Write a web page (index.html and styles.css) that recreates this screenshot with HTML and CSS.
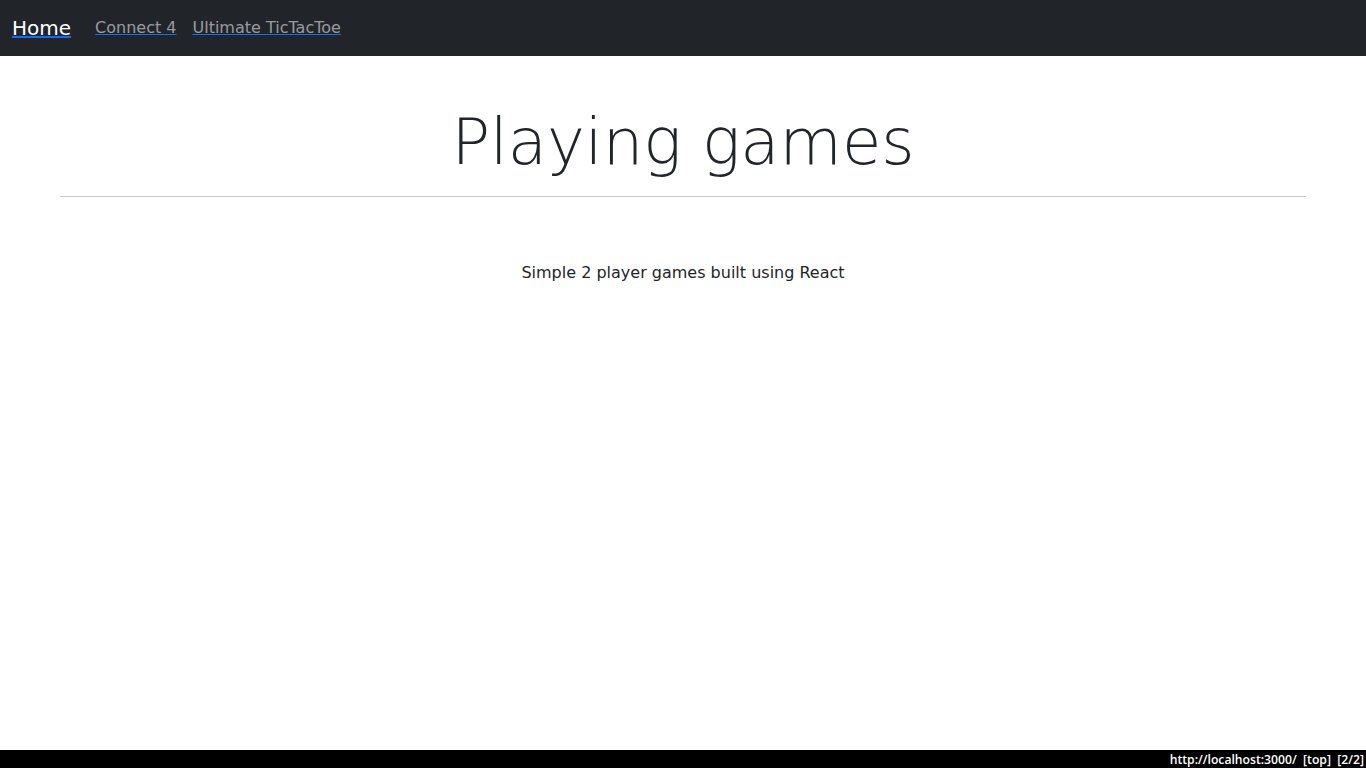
FILE: index.html
```html
<!DOCTYPE html>
<html lang="en">
<head>
<meta charset="utf-8">
<title>Playing games</title>
<link rel="stylesheet" href="styles.css">
</head>
<body>
<nav class="navbar">
  <a class="brand" href="#">Home</a>
  <div class="nav-links">
    <a class="nav-link" href="#">Connect 4</a>
    <a class="nav-link" href="#">Ultimate TicTacToe</a>
  </div>
</nav>
<main class="page">
  <header class="hero">
    <h1 class="title">Playing games</h1>
    <hr class="rule">
  </header>
  <p class="lead">Simple 2 player games built using React</p>
</main>
<div class="statusbar">http://localhost:3000/&nbsp; [top]&nbsp; [2/2]</div>
</body>
</html>
```
FILE: styles.css
```css
* { box-sizing: border-box; }
html, body { height: 100%; }
body {
  margin: 0;
  font-family: "DejaVu Sans", sans-serif;
  font-size: 16px;
  line-height: 1.5;
  color: #212529;
  background: #fff;
  display: flex;
  flex-direction: column;
}
.navbar {
  display: flex;
  align-items: center;
  background: #212529;
  padding: 8px 12px;
  height: 56px;
}
.brand {
  font-size: 20px;
  line-height: 30px;
  padding: 5px 0;
  margin-right: 16px;
  color: #fff;
  text-decoration: underline;
  text-decoration-color: #0d6efd;
}
.nav-links { display: flex; }
.nav-link {
  padding: 8px;
  color: rgba(255,255,255,.55);
  text-decoration: underline;
  text-decoration-color: #0d6efd;
}
.page { flex: 1; }
.hero {
  margin: 0 60px;
  padding-top: 48px;
  text-align: center;
}
.title {
  margin: 0 0 15px;
  font-size: 64px;
  font-weight: 300;
  line-height: 1.2;
}
.rule {
  margin: 0;
  border: 0;
  border-top: 1px solid #212529;
  opacity: .25;
}
.lead {
  margin: 64px 0 0;
  text-align: center;
}
.statusbar {
  flex: none;
  height: 18px;
  overflow: hidden;
  background: #000;
  color: #fff;
  text-align: right;
  font-family: "Open Sans", sans-serif;
  font-weight: 600;
  font-size: 12.2px;
  line-height: 18px;
  padding: 1px 2px 0 0;
  white-space: pre;
}
```
